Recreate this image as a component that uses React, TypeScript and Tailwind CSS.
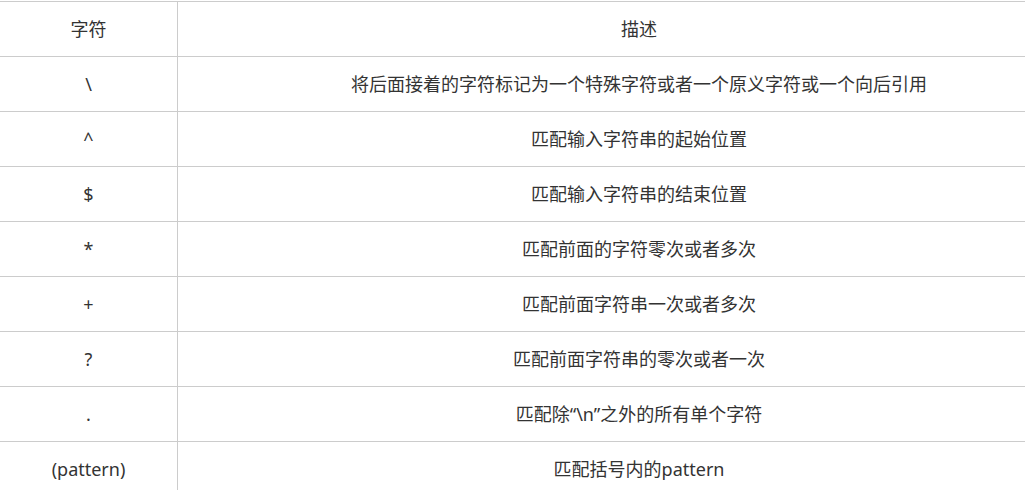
const rows: [string, string][] = [
  ["\\", "将后面接着的字符标记为一个特殊字符或者一个原义字符或一个向后引用"],
  ["^", "匹配输入字符串的起始位置"],
  ["$", "匹配输入字符串的结束位置"],
  ["*", "匹配前面的字符零次或者多次"],
  ["+", "匹配前面字符串一次或者多次"],
  ["?", "匹配前面字符串的零次或者一次"],
  [".", "匹配除“\\n”之外的所有单个字符"],
  ["(pattern)", "匹配括号内的pattern"],
];

function Row({ left, right }: { left: string; right: string }) {
  return (
    <div className="flex h-[55px] border-t border-[#cccccc]">
      <div className="flex w-[178px] shrink-0 items-center justify-center border-r border-[#cccccc]">
        {left}
      </div>
      <div className="flex flex-1 items-center justify-center">{right}</div>
    </div>
  );
}

export default function App() {
  return (
    <div className="h-[490px] w-[1025px] overflow-hidden bg-white pt-px">
      <div
        className="w-[1100px] text-[18px] text-[#333333]"
        style={{ fontFamily: '"Noto Sans", "Noto Sans CJK SC", sans-serif' }}
      >
        <Row left="字符" right="描述" />
        {rows.map(([l, r]) => (
          <Row key={l} left={l} right={r} />
        ))}
      </div>
    </div>
  );
}
